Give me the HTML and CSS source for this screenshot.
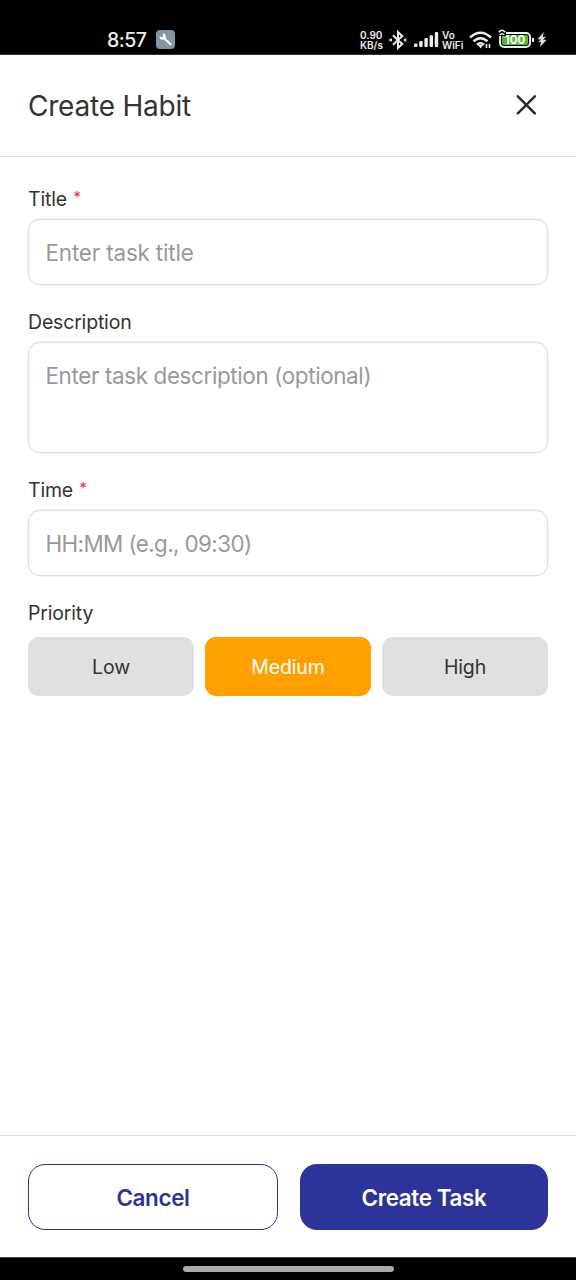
FILE: index.html
```html
<!DOCTYPE html>
<html lang="en">
<head>
<meta charset="utf-8">
<title>Create Habit</title>
<link rel="stylesheet" href="styles.css">
</head>
<body>
<div class="screen">
  <div class="status">
    <span class="clock">8:57</span>
    <svg class="tool" width="19" height="19" viewBox="0 0 19 19"><rect width="19" height="19" rx="4" fill="#8394a8"/><path d="M8 8L14.5 14.2" stroke="#fff" stroke-width="2.2" stroke-linecap="round"/><path d="M6.6 3.4A3.2 3.2 0 1 1 3.5 6.5L5.8 7.3L7.3 5.8Z" fill="#fff"/></svg>
    <div class="stack rate"><span>0.90</span><span>KB/s</span></div>
    <svg class="bt" width="18" height="20" viewBox="0 0 18 20" fill="none" stroke="#eee" stroke-width="2"><path d="M4 5.3L13.2 14L9 18V2L13.2 6L4 14.7"/><path d="M.5 10h2.4M15 10h2.4" stroke-width="2.4"/></svg>
    <svg class="signal" width="25" height="16" viewBox="0 0 25 16" fill="#eee"><rect y="11.5" width="3.4" height="3.5" rx="1"/><rect x="5.2" y="9" width="3.4" height="6" rx="1"/><rect x="10.4" y="6" width="3.4" height="9" rx="1"/><rect x="15.6" y="3.2" width="3.4" height="11.8" rx="1"/><rect x="20.8" y="0" width="3.4" height="15" rx="1"/></svg>
    <div class="stack vo"><span>Vo</span><span>WiFi</span></div>
    <svg class="wifi" width="24" height="18" viewBox="0 0 24 18" fill="none" stroke="#eee" stroke-width="2.5"><path d="M1 6.5Q11.5-3 22 6.5M4.5 10.3Q11.5 4 18.5 10.3M8 13.8Q11.5 10.8 15 13.8"/><path d="M9 14L11.5 17.4L14 14Z" fill="#eee" stroke="none"/><path d="M17.5 17v-4M20.5 13v4" stroke-width="1.6"/></svg>
    <div class="battery"><span>100</span>
      <svg class="leaf" width="8" height="7" viewBox="0 0 8 7" fill="none" stroke="#eee" stroke-width="1.6"><path d="M.8 3.2Q4-.8 7.2 3.2M1.8 6Q4 3.4 6.2 6"/></svg>
    </div>
    <svg class="bolt" width="10" height="15" viewBox="0 0 10 15" fill="#ddd"><path d="M6.8 0L.5 7.2L4.2 7.4L.8 10.3L4 10.1L3 15L9.6 8L6 7.6L9.3 4.8L5.8 5Z"/></svg>
  </div>
  <header class="header">
    <h1>Create Habit</h1>
    <svg class="close" width="20" height="20" viewBox="0 0 20 20" fill="none" stroke="#292929" stroke-width="2.5" stroke-linecap="round"><path d="M1.8 1.3L18.8 18.3M18.8 1.3L1.8 18.3"/></svg>
  </header>
  <main class="form">
    <div class="label">Title <span class="star">*</span></div>
    <div class="field"><span class="p-title">Enter task title</span></div>
    <div class="label">Description</div>
    <div class="field area"><span class="p-desc">Enter task description (optional)</span></div>
    <div class="label">Time <span class="star">*</span></div>
    <div class="field"><span class="p-time">HH:MM (e.g., 09:30)</span></div>
    <div class="label">Priority</div>
    <div class="choices">
      <div class="choice">Low</div>
      <div class="choice active">Medium</div>
      <div class="choice">High</div>
    </div>
  </main>
  <footer class="footer">
    <div class="btn cancel">Cancel</div>
    <div class="btn create">Create Task</div>
  </footer>
  <div class="navbar"><div class="handle"></div></div>
</div>
</body>
</html>
```
FILE: styles.css
```css
* { box-sizing: border-box; }
body { margin: 0; background: #fff; font-family: Inter, "Noto Sans", sans-serif; color: #333; }
.screen { width: 576px; height: 1280px; display: flex; flex-direction: column; overflow: hidden; }
.status { height: 55px; flex: none; background: #000; color: #eee; display: flex; align-items: center; padding: 25px 0 0 107px; border-bottom: 1px solid #333; }
.clock { width: 49px; font-size: 19.5px; font-weight: 500; line-height: 28px; letter-spacing: -.5px; padding-top: 1px; white-space: nowrap; }
.status svg { flex: none; }
.stack { display: flex; flex-direction: column; gap: 2px; font-size: 10px; line-height: 8px; font-weight: 600; white-space: nowrap; }
.rate { width: 29px; margin-left: 185px; }
.signal { margin-left: 7px; }
.vo { width: 27px; margin-left: 3px; }
.battery { position: relative; width: 32px; height: 16px; margin-left: 6px; border: 2px solid #eee; border-radius: 5px; background: #55b82f; background-clip: padding-box; box-shadow: inset 0 0 0 1px #000; color: #fff; font-size: 11.5px; font-weight: 700; line-height: 12px; text-align: center; }
.battery::after { content: ""; position: absolute; right: -5px; top: 4px; width: 2px; height: 4px; background: #eee; }
.leaf { position: absolute; left: -3px; top: -5px; background: #000; }
.bolt { margin-left: 6px; }
.header { height: 102px; flex: none; padding: 0 40px 2px 28px; display: flex; align-items: center; justify-content: space-between; border-bottom: 1px solid #e0e0e0; }
h1 { margin: 0; padding-top: 2px; font-size: 28px; font-weight: 400; line-height: 36px; letter-spacing: -.22px; }
.form { flex: 1; padding: 29px 28px 0; display: flex; flex-direction: column; }
.label { height: 27px; flex: none; line-height: 27px; margin-bottom: 6px; font-size: 19.5px; letter-spacing: -.18px; white-space: nowrap; }
.star { display: inline-block; font-size: 15px; font-weight: 500; line-height: 16px; vertical-align: 4px; margin-left: 1px; color: #f44336; }
.field { height: 66px; flex: none; margin-bottom: 24px; border: 1.5px solid #e0e0e0; border-radius: 12px; padding: 17px 16.5px; font-size: 22.4px; line-height: 32px; color: #999; white-space: nowrap; box-shadow: 0 0 0 .5px #e8e8e8; }
.area { height: 111px; }
.p-title { letter-spacing: -.15px; }
.p-desc { letter-spacing: -.36px; }
.p-time { letter-spacing: -.6px; }
.choices { display: grid; grid-template-columns: repeat(3, 1fr); gap: 11px; margin-top: 4px; }
.choice { height: 59px; border-radius: 11px; background: #e0e0e0; display: flex; align-items: center; justify-content: center; font-size: 19.5px; letter-spacing: -.15px; }
.active { background: #ffa000; color: #fff; }
.footer { height: 122px; flex: none; padding: 28px; border-top: 1px solid #e0e0e0; display: flex; gap: 22px; }
.btn { height: 66px; border-radius: 17px; display: flex; align-items: center; justify-content: center; font-size: 22.4px; font-weight: 600; letter-spacing: -.35px; }
.cancel { width: 250px; border: 1.5px solid #2c3399; color: #2c3399; }
.create { width: 248px; flex: none; background: #2c3399; color: #fff; }
.navbar { height: 23px; flex: none; background: #000; border-top: 1px solid #444; display: flex; justify-content: center; padding-top: 8px; }
.handle { width: 211px; height: 6px; border-radius: 3px; background: #aaa; }
```
